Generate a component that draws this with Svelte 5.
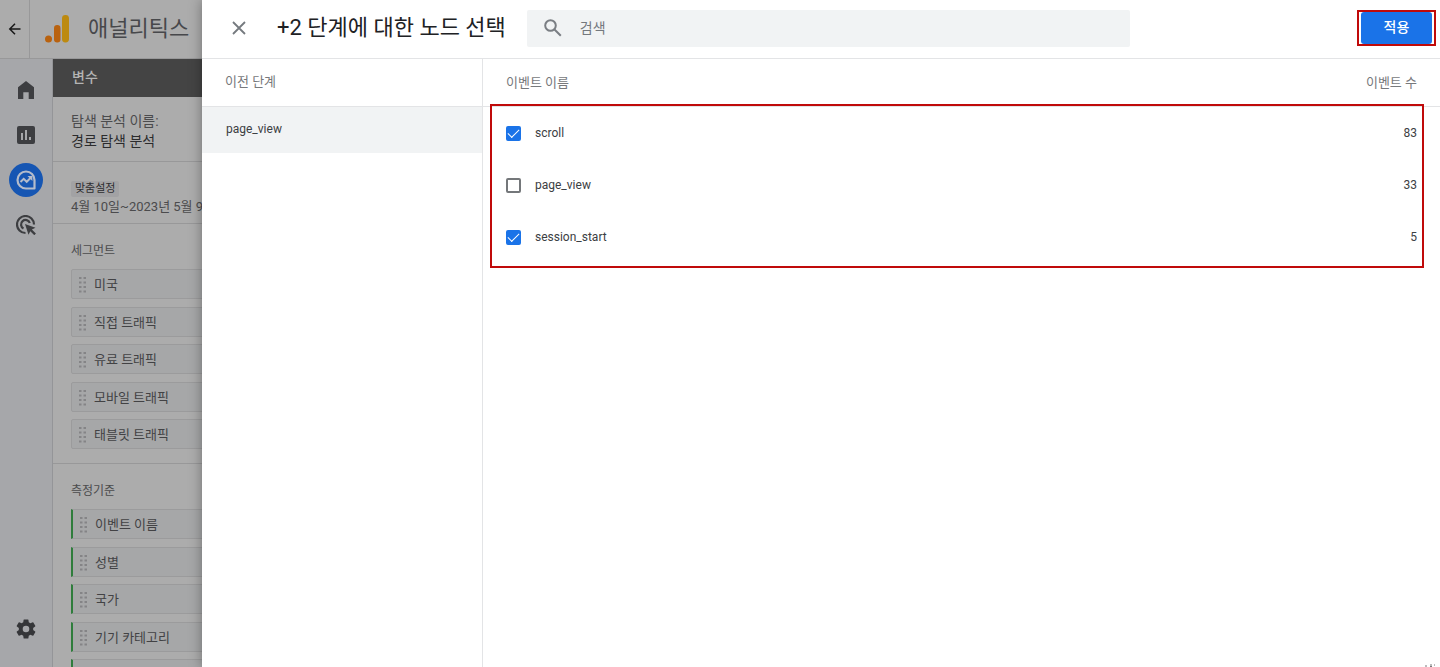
<script>
  let query = ''

  let events = [
    { name: 'scroll', count: 83, checked: true },
    { name: 'page_view', count: 33, checked: false },
    { name: 'session_start', count: 5, checked: true }
  ]

  const segments = ['미국', '직접 트래픽', '유료 트래픽', '모바일 트래픽', '태블릿 트래픽']
  const dimensions = ['이벤트 이름', '성별', '국가', '기기 카테고리', '']

  $: visibleEvents = events.filter((event) => event.name.includes(query))
</script>

{#snippet grip()}
  <svg class="grip" width="8" height="16" viewBox="0 0 8 16" aria-hidden="true">
    {#each [0, 4.5, 9, 13.5] as y}
      <rect x="0" y={y} width="2.500" height="2" />
      <rect x="4.500" y={y} width="2.500" height="2" />
    {/each}
  </svg>
{/snippet}

<div class="page">
  <header class="topbar">
    <button class="back" aria-label="뒤로">
      <svg width="14" height="14" viewBox="0 0 14 14">
        <path d="M12.500 7H2M7 1.800 1.800 7 7 12.200" fill="none" stroke="#171717" stroke-width="1.500" />
      </svg>
    </button>
    <svg class="logo" width="26" height="28" viewBox="0 0 26 28" aria-hidden="true">
      <circle cx="3.500" cy="24" r="3.500" fill="#b9620f" />
      <rect x="9" y="10" width="6.500" height="17.500" rx="3.200" fill="#b9620f" />
      <rect x="17" y="0" width="7" height="27.500" rx="3.400" fill="#bd8a10" />
    </svg>
    <span class="product">애널리틱스</span>
  </header>

  <div class="body">
    <nav class="rail">
      <a href="#home" aria-label="홈">
        <svg width="16" height="18" viewBox="0 0 16 18">
          <path d="M0 6.300 8 0l8 6.300V18h-5.300v-6.700H5.300V18H0z" fill="#3d3e41" />
        </svg>
      </a>
      <a href="#reports" aria-label="보고서">
        <svg width="18" height="18" viewBox="0 0 18 18">
          <rect width="18" height="18" rx="2" fill="#3d3e41" />
          <path d="M5 7v7M9 4v10M13 11v3" stroke="#a6a7aa" stroke-width="2" />
        </svg>
      </a>
      <a href="#explore" class="active" aria-label="탐색">
        <svg width="22" height="22" viewBox="0 0 22 22" fill="none" stroke="#b4bccb">
          <path d="M19.500 19.500H11A8.500 8.500 0 1 1 19.500 11z" stroke-width="2.200" stroke-linejoin="round" />
          <path d="m5.500 13 3.200-3.200 3 3L16 8.500" stroke-width="2" />
          <path d="M12.500 7h4.900v4.900z" fill="#b4bccb" stroke="none" />
        </svg>
      </a>
      <a href="#ads" aria-label="광고">
        <svg width="20" height="20" viewBox="0 0 20 20" fill="none" stroke="#3d3e41" stroke-width="2.200">
          <path d="M9.500 18A8.500 8.500 0 1 1 18 9.500" />
          <path d="M7.500 13.500A4.500 4.500 0 1 1 13.800 8" />
          <path d="m9 9 10.500 3.700-3.600 1.900 4 4-1.600 1.600-4-4-1.800 3.500z" fill="#3d3e41" stroke="none" />
        </svg>
      </a>
      <a href="#admin" class="admin" aria-label="관리">
        <svg width="24" height="24" viewBox="0 0 24 24">
          <path
            fill="#353639"
            d="M19.140 12.940c.04-.3.060-.61.060-.94s-.02-.64-.07-.94l2.030-1.580a.49.49 0 0 0 .12-.61l-1.920-3.320a.49.49 0 0 0-.59-.22l-2.390.96a7 7 0 0 0-1.620-.94l-.36-2.540a.48.48 0 0 0-.48-.41h-3.840a.48.48 0 0 0-.47.41l-.36 2.540c-.59.24-1.130.57-1.620.94l-2.390-.96a.48.48 0 0 0-.59.22L2.740 8.870a.47.47 0 0 0 .12.61l2.030 1.580c-.05.3-.09.63-.09.94s.02.64.07.94l-2.030 1.580a.49.49 0 0 0-.12.61l1.920 3.320c.12.22.37.29.59.22l2.390-.96c.5.38 1.030.7 1.620.94l.36 2.540c.05.24.24.41.48.41h3.840c.24 0 .44-.17.47-.41l.36-2.540a7 7 0 0 0 1.620-.94l2.390.96c.22.08.47 0 .59-.22l1.920-3.320a.47.47 0 0 0-.12-.61zM12 15.300A3.300 3.300 0 1 1 12 8.700a3.300 3.300 0 0 1 0 6.600z"
          />
        </svg>
      </a>
    </nav>

    <aside class="variables">
      <h2>변수</h2>
      <div class="block name">
        <span>탐색 분석 이름:</span>
        <strong>경로 탐색 분석</strong>
      </div>
      <div class="block period">
        <span class="tag">맞춤설정</span>
        <span class="dates">4월 10일~2023년 5월 9일</span>
      </div>
      <section class="block group">
        <h3>세그먼트</h3>
        <ul>
          {#each segments as segment}
            <li>{@render grip()}{segment}</li>
          {/each}
        </ul>
      </section>
      <section class="block group">
        <h3>측정기준</h3>
        <ul class="dimensions">
          {#each dimensions as dimension}
            <li>{@render grip()}{dimension}</li>
          {/each}
        </ul>
      </section>
    </aside>
  </div>

  <div class="panel" role="dialog" aria-labelledby="panel-title">
    <header class="panel-header">
      <button class="close" aria-label="닫기">
        <svg width="14" height="14" viewBox="0 0 14 14">
          <path d="m1 1 12 12M13 1 1 13" stroke="#757a7f" stroke-width="1.800" />
        </svg>
      </button>
      <h1 id="panel-title">+2 단계에 대한 노드 선택</h1>
      <label class="search">
        <svg width="18" height="18" viewBox="0 0 18 18" fill="none" stroke="#7a7e83" stroke-width="2">
          <circle cx="6.500" cy="6.500" r="5.300" />
          <path d="m10.500 10.500 6.300 6.300" />
        </svg>
        <input type="text" placeholder="검색" aria-label="검색" bind:value={query} />
      </label>
      <div class="apply-frame">
        <button class="apply">적용</button>
      </div>
    </header>

    <div class="columns">
      <div class="previous">
        <h3>이전 단계</h3>
        <button class="step">page_view</button>
      </div>
      <div class="events">
        <table>
          <thead>
            <tr>
              <th>이벤트 이름</th>
              <th class="count">이벤트 수</th>
            </tr>
          </thead>
          <tbody>
            {#each visibleEvents as event (event.name)}
              <tr>
                <td>
                  <label>
                    <input type="checkbox" bind:checked={event.checked} />
                    {event.name}
                  </label>
                </td>
                <td class="count">{event.count}</td>
              </tr>
            {/each}
          </tbody>
        </table>
        <div class="highlight"></div>
      </div>
    </div>

    <svg class="resize" width="12" height="3" viewBox="0 0 12 3" aria-hidden="true">
      <path d="M1 2h2M6 1h2M6 2.500h2M10 1h1" stroke="#77787a" />
    </svg>
  </div>
</div>

<style>
  :global(body) {
    overflow: hidden;
  }

  .page {
    position: relative;
    display: flex;
    flex-direction: column;
    height: 100vh;
    overflow: hidden;
    background: #acacac;
    color: #4b4b4d;
    font-family: Roboto, 'Noto Sans CJK KR', sans-serif;
    font-size: 13px;
    line-height: 20px;
  }

  .page * {
    box-sizing: border-box;
  }

  h1,
  h2,
  h3,
  ul {
    margin: 0;
    padding: 0;
    font-weight: 400;
  }

  button {
    padding: 0;
    border: 0;
    background: none;
    font: inherit;
    cursor: pointer;
  }

  svg {
    display: block;
    flex: none;
  }

  .topbar {
    display: flex;
    flex: none;
    align-items: center;
    height: 59px;
    border-bottom: 1px solid #989899;
  }

  .back {
    display: flex;
    align-items: center;
    justify-content: center;
    align-self: stretch;
    width: 30px;
    border-right: 1px solid #989899;
  }

  .logo {
    margin: 0 17px 0 15px;
  }

  .product {
    font-size: 22px;
    line-height: 28px;
    color: #47484b;
  }

  .body {
    display: flex;
    flex: 1;
    min-height: 0;
  }

  .rail {
    display: flex;
    flex: none;
    flex-direction: column;
    align-items: center;
    gap: 11px;
    width: 53px;
    padding: 14px 0 21px;
    border-right: 1px solid #949598;
    background: #a6a7aa;
  }

  .rail a {
    display: flex;
    align-items: center;
    justify-content: center;
    width: 34px;
    height: 34px;
    border-radius: 50%;
  }

  .rail .active {
    background: #1656b3;
  }

  .rail .admin {
    margin-top: auto;
  }

  .variables {
    flex: 1;
    min-width: 0;
    white-space: nowrap;
  }

  h2 {
    height: 38px;
    padding: 0 19px;
    background: #444;
    color: #b4b4b4;
    font-size: 14px;
    font-weight: 500;
    line-height: 36px;
  }

  .block {
    display: flex;
    flex-direction: column;
    padding: 17px 18px 14px;
    border-bottom: 1px solid #989899;
  }

  .name {
    padding: 14px 18px 10px;
    font-size: 14px;
  }

  .name strong {
    color: #2b2b2d;
    font-weight: 400;
  }

  .period {
    align-items: flex-start;
    padding: 19px 18px 6px;
  }

  .tag {
    padding: 0 4px;
    border-radius: 2px;
    background: #a2a2a4;
    color: #2e2e30;
    font-size: 11px;
    line-height: 16px;
  }

  .group {
    gap: 8px;
  }

  h3 {
    font-size: 12px;
  }

  ul {
    display: flex;
    flex-direction: column;
    justify-content: space-between;
    min-height: 180px;
    list-style: none;
  }

  li {
    display: flex;
    align-items: center;
    gap: 7px;
    height: 30px;
    padding: 2px 7px 0;
    border: 1px solid #9b9b9c;
    border-radius: 2px;
    background: #a6a7a8;
    color: #424244;
  }

  .dimensions li {
    border-left: 2px solid #2f7d3c;
    border-radius: 0;
  }

  .grip {
    fill: #848486;
  }

  .panel {
    position: absolute;
    inset: 0 0 0 202px;
    display: flex;
    flex-direction: column;
    background: #fff;
    box-shadow: 0 0 12px rgba(0, 0, 0, 0.35);
    color: #3c4043;
  }

  .panel-header {
    display: flex;
    flex: none;
    align-items: center;
    height: 59px;
    padding: 0 4px 2px 22px;
    border-bottom: 1px solid #e3e4e6;
  }

  .close {
    display: flex;
    align-items: center;
    justify-content: center;
    width: 30px;
    height: 30px;
    margin-right: 23px;
  }

  h1 {
    color: #202124;
    font-size: 22px;
    line-height: 28px;
    white-space: nowrap;
  }

  .search {
    display: flex;
    flex: 1;
    align-items: center;
    gap: 18px;
    max-width: 603px;
    height: 37px;
    margin: 0 21px;
    padding: 0 17px;
    border-radius: 2px;
    background: #f1f3f4;
  }

  .search input {
    flex: 1;
    min-width: 0;
    padding: 0;
    border: 0;
    outline: 0;
    background: none;
    color: #3c4043;
    font: inherit;
    font-size: 14px;
  }

  .search input::placeholder {
    color: #74787d;
    opacity: 1;
  }

  .apply-frame {
    margin-left: auto;
    padding: 0 2px;
    border: 2px solid #c00a0a;
  }

  .apply {
    display: block;
    width: 71px;
    height: 32px;
    padding-bottom: 2px;
    border-radius: 3px;
    background: #1a73e8;
    color: #fff;
    font-size: 14px;
    font-weight: 500;
  }

  .columns {
    display: flex;
    flex: 1;
  }

  .previous {
    width: 281px;
    border-right: 1px solid #e3e4e6;
  }

  .previous h3,
  th {
    height: 48px;
    padding: 0 23px;
    border-bottom: 1px solid #e3e4e6;
    color: #77797c;
    font-size: 13px;
    font-weight: 400;
    line-height: 46px;
    text-align: left;
  }

  .step {
    display: block;
    width: 100%;
    height: 46px;
    padding: 0 24px 2px;
    background: #f1f3f4;
    color: #3c4043;
    font-size: 12px;
    text-align: left;
  }

  .events {
    position: relative;
    flex: 1;
  }

  table {
    width: 100%;
    border-collapse: separate;
    border-spacing: 0;
  }

  td {
    height: 52px;
    padding: 0 23px;
    font-size: 12px;
  }

  th.count,
  td.count {
    text-align: right;
  }

  td label {
    display: flex;
    align-items: center;
    gap: 14px;
  }

  td input {
    display: grid;
    flex: none;
    place-items: center;
    width: 15px;
    height: 15px;
    margin: 0;
    border: 2px solid #74777a;
    border-radius: 2px;
    background: #fff;
    appearance: none;
  }

  td input:checked {
    border-color: #1a73e8;
    background: #1a73e8;
  }

  td input:checked::before {
    content: '';
    width: 10px;
    height: 5px;
    margin-top: -3px;
    border: solid #fff;
    border-width: 0 0 1px 1px;
    transform: rotate(-45deg);
  }

  /* frame around the rows to choose from */
  .highlight {
    position: absolute;
    top: 45px;
    right: 16px;
    left: 7px;
    height: 164px;
    border: 2px solid #c00a0a;
    pointer-events: none;
  }

  .resize {
    position: absolute;
    right: 4px;
    bottom: 0;
  }
</style>
